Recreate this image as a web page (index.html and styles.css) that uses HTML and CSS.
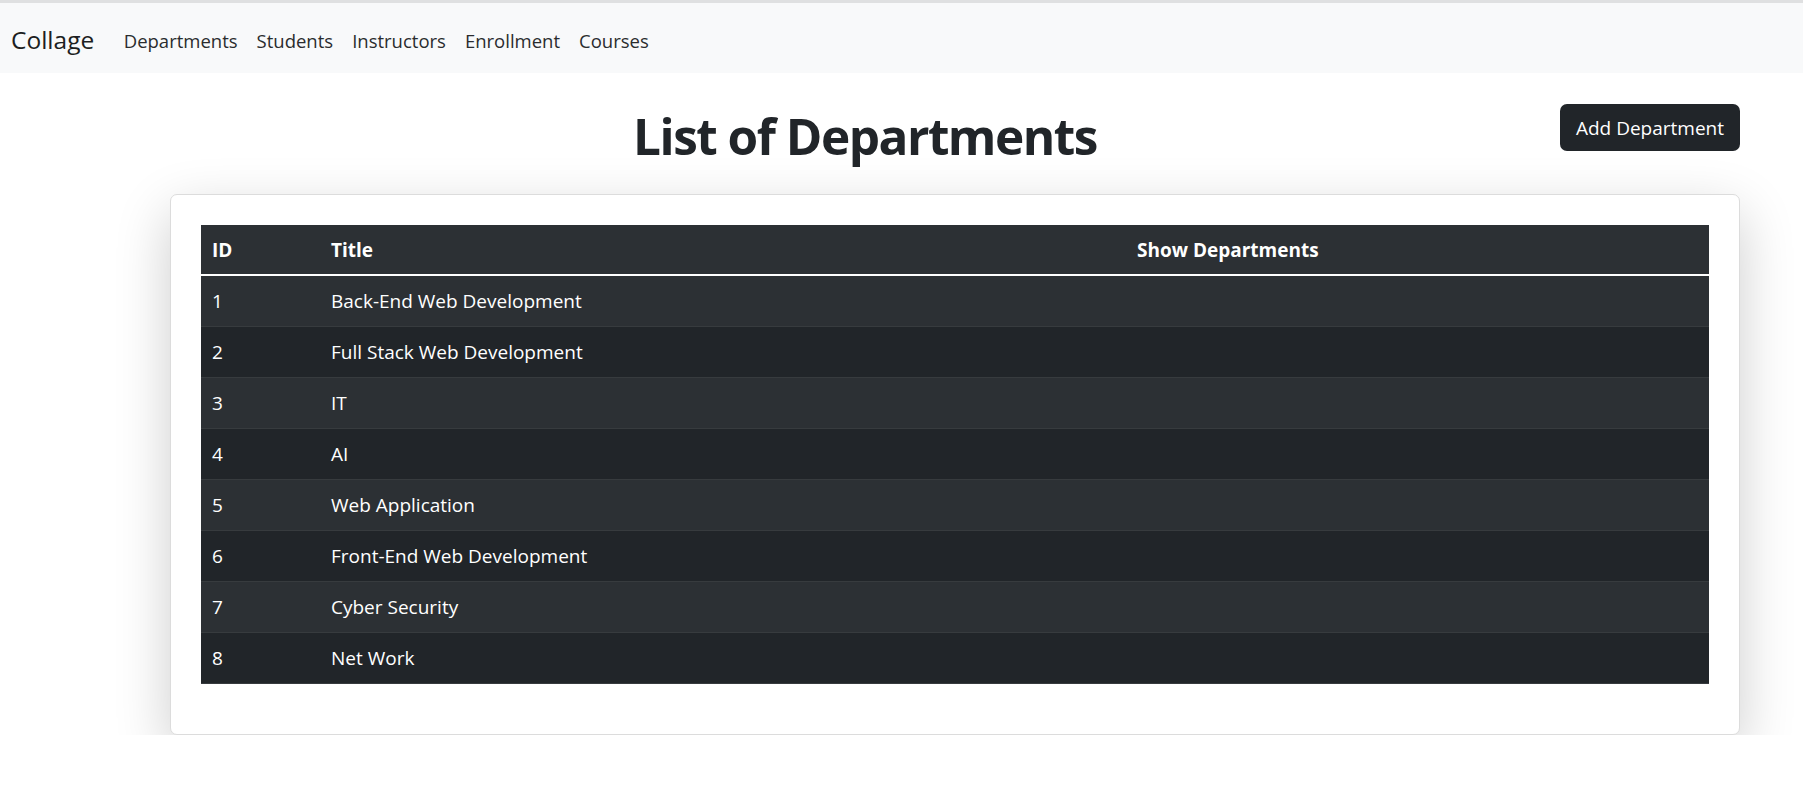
FILE: index.html
```html
<!DOCTYPE html>
<html lang="en">
<head>
<meta charset="utf-8">
<title>List of Departments</title>
<link rel="stylesheet" href="styles.css">
</head>
<body>
<nav class="navbar">
  <a class="brand" href="#">Collage</a>
  <ul class="nav">
    <li><a class="nav-link" href="#">Departments</a></li>
    <li><a class="nav-link" href="#">Students</a></li>
    <li><a class="nav-link" href="#">Instructors</a></li>
    <li><a class="nav-link" href="#">Enrollment</a></li>
    <li><a class="nav-link" href="#">Courses</a></li>
  </ul>
</nav>
<main class="page">
  <div class="page-head">
    <div class="spacer"></div>
    <h1 class="title">List of Departments</h1>
    <a class="btn" href="#">Add Department</a>
  </div>
  <section class="card">
    <table class="table">
      <colgroup>
        <col class="col-id">
        <col class="col-title">
        <col class="col-show">
      </colgroup>
      <thead>
        <tr><th>ID</th><th>Title</th><th>Show Departments</th></tr>
      </thead>
      <tbody>
        <tr><td>1</td><td>Back-End Web Development</td><td></td></tr>
        <tr><td>2</td><td>Full Stack Web Development</td><td></td></tr>
        <tr><td>3</td><td>IT</td><td></td></tr>
        <tr><td>4</td><td>AI</td><td></td></tr>
        <tr><td>5</td><td>Web Application</td><td></td></tr>
        <tr><td>6</td><td>Front-End Web Development</td><td></td></tr>
        <tr><td>7</td><td>Cyber Security</td><td></td></tr>
        <tr><td>8</td><td>Net Work</td><td></td></tr>
      </tbody>
    </table>
  </section>
</main>
</body>
</html>
```
FILE: styles.css
```css
* { box-sizing: border-box; }

html, body {
  margin: 0;
  padding: 0;
  background: #fff;
}

body {
  font-family: "Open Sans", "Noto Sans", Arial, sans-serif;
  font-size: 19px;
  color: #212529;
}

a { text-decoration: none; }

.navbar {
  display: flex;
  align-items: center;
  height: 73px;
  border-top: 3px solid #dfe0e1;
  background: #f8f9fa;
  padding: 5px 11px 0;
}

.brand {
  font-size: 24.5px;
  color: #1c1e21;
  margin-right: 20px;
  line-height: 1.5;
}

.nav {
  display: flex;
  list-style: none;
  margin: 0;
  padding: 0;
}

.nav-link {
  display: block;
  padding: 8px 9.5px;
  font-size: 18.5px;
  color: #2a2c2e;
  line-height: 1.5;
}

.page {
  padding: 0 63px 0 170px;
}

.page-head {
  display: flex;
  justify-content: space-between;
  align-items: flex-start;
  margin-top: 31px;
}

.spacer { width: 0; }

.title {
  margin: 2px 0 0;
  font-size: 49.5px;
  font-weight: 700;
  letter-spacing: -1.5px;
  line-height: 60px;
  color: #212529;
}

.btn {
  display: inline-flex;
  align-items: center;
  height: 47px;
  padding: 0 16px;
  background: #212529;
  color: #fff;
  border-radius: 7px;
  font-size: 19px;
}

.card {
  margin-top: 28px;
  background: #fff;
  border: 1px solid #dcdcdc;
  border-radius: 7px;
  padding: 30px;
  box-shadow: 0 18px 55px rgba(0, 0, 0, 0.2);
}

.table {
  width: 100%;
  table-layout: fixed;
  border-collapse: separate;
  border-spacing: 0;
  margin-bottom: 20px;
  color: #fff;
}

.col-id { width: 119px; }
.col-title { width: 806px; }

.table th {
  text-align: left;
  font-weight: 700;
  background: #2c3034;
  padding: 12px 11px 11px;
  line-height: 26px;
  border-bottom: 2px solid #fff;
}

.table td {
  padding: 12px 11px;
  line-height: 26px;
  border-bottom: 1px solid #373b3e;
  background: #212529;
}

.table tbody tr:nth-child(odd) td {
  background: #2c3034;
}
```
